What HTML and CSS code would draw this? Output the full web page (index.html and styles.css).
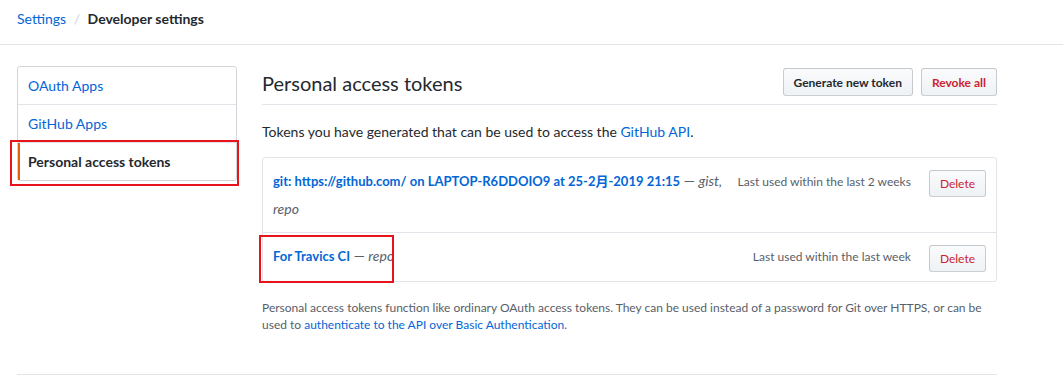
FILE: index.html
```html
<!DOCTYPE html>
<html lang="en">
<head>
    <meta charset="UTF-8">
    <title>Personal access tokens</title>
    <link rel="stylesheet" href="styles.css">
</head>
<body>
    <div class="page-head">
        <nav class="breadcrumb">
            <a href="#">Settings</a>
            <span class="sep">/</span>
            <strong>Developer settings</strong>
        </nav>
    </div>

    <div class="container">
        <div class="layout">
            <ul class="menu">
                <li><a href="#">OAuth Apps</a></li>
                <li><a href="#">GitHub Apps</a></li>
                <li class="selected">
                    <a href="#">Personal access tokens</a>
                    <span class="mark mark-menu"></span>
                </li>
            </ul>

            <div class="content">
                <div class="subhead">
                    <h2>Personal access tokens</h2>
                    <div class="actions">
                        <button class="btn">Generate new token</button>
                        <button class="btn btn-danger">Revoke all</button>
                    </div>
                </div>

                <p class="intro">Tokens you have generated that can be used to access the <a href="#">GitHub API</a>.</p>

                <div class="token-list">
                    <div class="token">
                        <div class="token-desc">
                            <a href="#" class="token-name">git: https://github.com/ on LAPTOP-R6DDOIO9 at 25-2<span class="cjk">月</span>-2019 21:15</a>
                            — <em>gist, repo</em>
                        </div>
                        <span class="last-used">Last used within the last 2 weeks</span>
                        <button class="btn btn-sm btn-danger">Delete</button>
                    </div>
                    <div class="token">
                        <div class="token-desc">
                            <a href="#" class="token-name">For Travics CI</a>
                            — <em>repo</em>
                        </div>
                        <span class="last-used">Last used within the last week</span>
                        <button class="btn btn-sm btn-danger">Delete</button>
                        <span class="mark mark-token"></span>
                    </div>
                </div>

                <p class="note">Personal access tokens function like ordinary OAuth access tokens. They can be used instead of a password for Git over HTTPS, or can be used to <a href="#">authenticate to the API over Basic Authentication</a>.</p>
            </div>
        </div>

        <div class="footer"></div>
    </div>
</body>
</html>
```

FILE: styles.css
```css
body {
    font-family: Lato, 'Noto Sans CJK SC', sans-serif;
    font-size: 14px;
    line-height: 1.5;
    color: #24292e;
    background: #fff;
    margin: 0;
}

a {
    color: #0366d6;
    text-decoration: none;
}

.page-head {
    height: 44px;
    border-bottom: 1px solid #e1e4e8;
    padding-left: 17px;
    display: flex;
    align-items: center;
}

.breadcrumb {
    font-size: 14px;
    margin-top: -8px;
}

.breadcrumb .sep {
    color: #d1d5da;
    padding: 0 4px;
}

.breadcrumb strong {
    font-weight: 700;
}

.container {
    width: 980px;
    padding-left: 17px;
}

.layout {
    display: grid;
    grid-template-columns: 220px 735px;
    gap: 25px;
    padding-top: 21px;
}

.menu {
    list-style: none;
    margin: 0;
    padding: 0;
    border: 1px solid #d1d5da;
    border-radius: 3px;
    align-self: start;
}

.menu li {
    position: relative;
    border-bottom: 1px solid #e1e4e8;
}

.menu li:last-child {
    border-bottom: none;
}

.menu a {
    display: block;
    padding: 8px 10px;
    line-height: 21px;
}

.menu .selected a {
    color: #24292e;
    font-weight: 700;
    border-left: 2px solid #e36209;
    padding-left: 8px;
}

.subhead {
    display: flex;
    align-items: center;
    justify-content: space-between;
    border-bottom: 1px solid #e1e4e8;
    height: 38px;
}

.subhead h2 {
    margin: 0;
    font-size: 20px;
    font-weight: 400;
    margin-top: -4px;
}

.actions {
    display: flex;
    gap: 8px;
    margin-top: -6px;
}

.btn {
    font-family: inherit;
    font-size: 12px;
    font-weight: 700;
    color: #24292e;
    height: 28px;
    padding: 0 10px;
    border: 1px solid rgba(27, 31, 35, 0.2);
    border-radius: 3px;
    background: linear-gradient(#fafbfc, #eff3f6 90%);
    cursor: pointer;
}

.btn-danger {
    color: #cb2431;
}

.btn-sm {
    height: 27px;
    padding: 0 10px;
    font-weight: 400;
    flex-shrink: 0;
}

.intro {
    margin: 16px 0 15px;
}

.token-list {
    border: 1px solid #e1e4e8;
    border-radius: 3px;
}

.token {
    position: relative;
    display: flex;
    align-items: flex-start;
    padding: 9px 10px 10px;
    border-bottom: 1px solid #e1e4e8;
}

.token:last-child {
    border-bottom: none;
    padding-bottom: 9px;
}

.token-desc {
    flex: 1;
    line-height: 27px;
    color: #586069;
}

.token-name {
    font-size: 13px;
    font-weight: 700;
}

.cjk {
    line-height: 1;
}

.token em {
    color: #586069;
}

.last-used {
    font-size: 12px;
    color: #586069;
    line-height: 20px;
    margin: 5px 18px 0 4px;
    white-space: nowrap;
}

.token .btn-sm {
    margin-top: 3px;
}

.note {
    font-size: 12px;
    color: #586069;
    line-height: 17px;
    margin: 17px 0 0;
}

.footer {
    margin-top: 41px;
    border-top: 1px solid #e1e4e8;
    height: 6px;
}

/* red annotation boxes drawn over the screenshot */
.mark {
    position: absolute;
    border: 2px solid #e8141c;
    pointer-events: none;
}

.mark-menu {
    left: -8px;
    right: -3px;
    top: -3px;
    bottom: -6px;
}

.mark-token {
    left: -4px;
    top: 2px;
    width: 131px;
    height: 44px;
}
```
